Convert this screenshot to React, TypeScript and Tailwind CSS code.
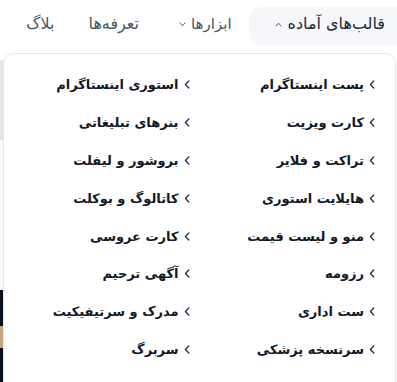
import React from "react";

const right = ["پست اینستاگرام", "کارت ویزیت", "تراکت و فلایر", "هایلایت استوری", "منو و لیست قیمت", "رزومه", "ست اداری", "سرنسخه پزشکی"];
const left = ["استوری اینستاگرام", "بنرهای تبلیغاتی", "بروشور و لیفلت", "کاتالوگ و بوکلت", "کارت عروسی", "آگهی ترحیم", "مدرک و سرتیفیکیت", "سربرگ"];

function Chev() {
  return (
    <svg width="6" height="9" viewBox="0 0 6 9" fill="none" className="shrink-0">
      <path d="M4.8 1 L1.4 4.5 L4.8 8" stroke="#1f2937" strokeWidth="1.2" strokeLinecap="round" strokeLinejoin="round" />
    </svg>
  );
}

function Caret({ up }: { up?: boolean }) {
  return (
    <svg width="7" height="5" viewBox="0 0 7 5" fill="none" className="shrink-0">
      <path d={up ? "M1 4 L3.5 1.2 L6 4" : "M1 1 L3.5 3.8 L6 1"} stroke="#4b5563" strokeWidth="1" strokeLinecap="round" strokeLinejoin="round" />
    </svg>
  );
}

function Item({ t }: { t: string }) {
  return (
    <div className="flex items-center gap-[5px] h-[37.8px]">
      <Chev />
      <span className="text-[13px] font-bold text-[#111827] leading-none">{t}</span>
    </div>
  );
}

export default function App() {
  return (
    <div dir="rtl" className="relative w-[397px] h-[382px] bg-white overflow-hidden" style={{ fontFamily: '"DejaVu Sans", sans-serif' }}>
      <div className="absolute left-0 top-[60px] w-[6px] h-[80px] bg-[#e5e7eb]" />
      <div className="absolute left-0 top-[290px] w-[6px] h-[92px] bg-[#0b1220]" />
      <div className="absolute left-0 top-[326px] w-[4px] h-[22px] bg-[#c9a97c]" />
      <nav className="flex items-start h-[53px] pt-[7px]">
        <div className="flex items-center gap-[6px] h-[39px] pr-[12px] pl-[26px] pb-[5px] bg-[#f5f7fa] rounded-l-xl">
          <span className="text-[16px] text-[#1f2937]">قالب‌های آماده</span>
          <Caret up />
        </div>
        <div className="flex items-center h-[39px] pb-[5px] gap-[5px] mr-[17px]">
          <span className="text-[15px] text-[#4b5563]">ابزارها</span>
          <Caret />
        </div>
        <div className="flex items-center h-[39px] pb-[5px] mr-[40px]">
          <span className="text-[16px] text-[#4b5563]">تعرفه‌ها</span>
        </div>
        <div className="flex items-center h-[39px] pb-[5px] mr-[34px]">
          <span className="text-[16px] text-[#4b5563]">بلاگ</span>
        </div>
      </nav>
      <div className="absolute left-[3px] right-[1px] top-[53px] h-[340px] bg-white border border-[#e5e7eb] rounded-[10px] shadow-[0_4px_12px_rgba(0,0,0,0.04)]">
        <div className="grid grid-cols-2 pt-[12px] pr-[20px]">
          <div className="flex flex-col">
            {right.map((t) => <Item key={t} t={t} />)}
          </div>
          <div className="flex flex-col">
            {left.map((t) => <Item key={t} t={t} />)}
          </div>
        </div>
      </div>
    </div>
  );
}
